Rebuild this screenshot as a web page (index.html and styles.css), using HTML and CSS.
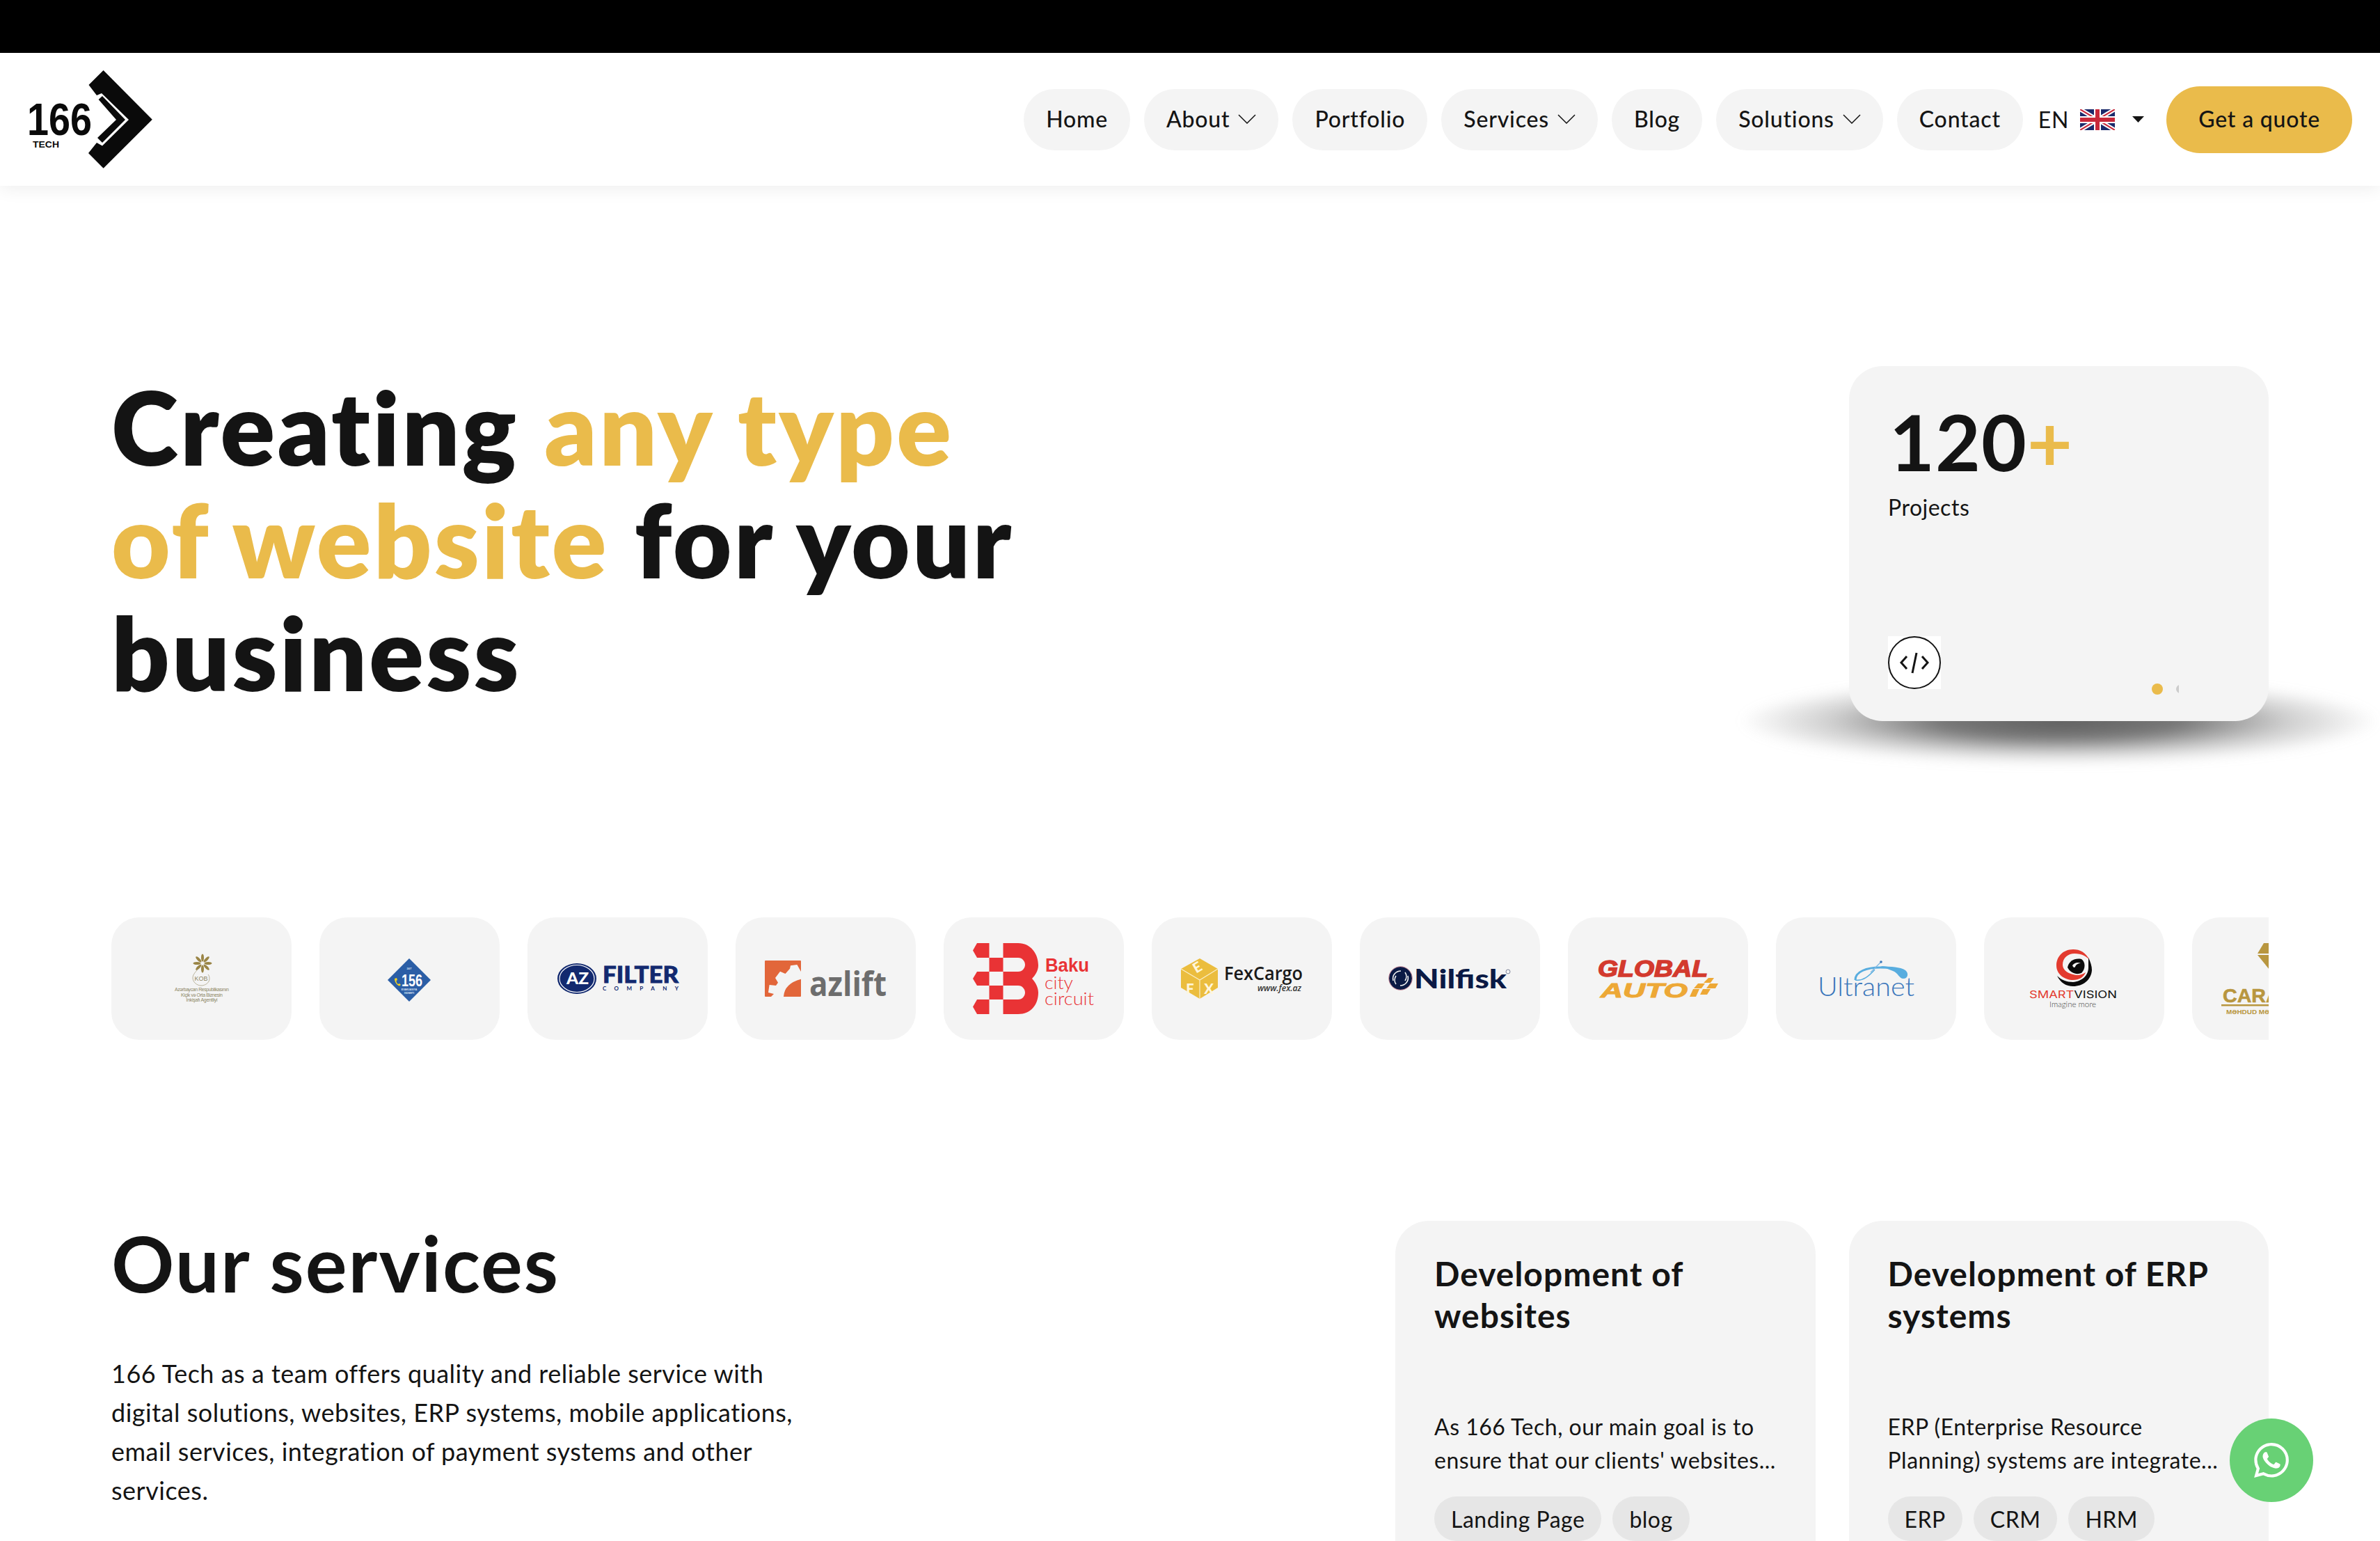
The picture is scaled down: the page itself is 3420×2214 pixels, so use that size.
FILE: index.html
```html
<!DOCTYPE html>
<html lang="en">
<head>
<meta charset="utf-8">
<title>166 Tech</title>
<link rel="stylesheet" href="styles.css">
</head>
<body>
<div class="topbar"></div>
<header class="header">
  <a class="logo" href="#">
    <svg width="240" height="191" viewBox="0 76 240 191">
      <polygon fill="#0a0a0a" points="148.6,101 218.8,171.7 148.6,241.7 127,220 139,205 147,209.5 185,172 146,134 139,137 127.5,122"/>
      <polygon fill="#0a0a0a" points="141.6,143 147,138 180,172 147,205 140,198 167,172"/>
      <text class="logo-num" x="39" y="194" textLength="93" lengthAdjust="spacingAndGlyphs">166</text>
      <text class="logo-tech" x="47" y="212" textLength="38" lengthAdjust="spacingAndGlyphs">TECH</text>
    </svg>
  </a>
  <nav class="nav">
    <a class="pill" href="#">Home</a>
    <a class="pill" href="#">About<svg class="chev" width="26" height="14" viewBox="0 0 26 14"><path d="M1 1l12 12L25 1"/></svg></a>
    <a class="pill" href="#">Portfolio</a>
    <a class="pill" href="#">Services<svg class="chev" width="26" height="14" viewBox="0 0 26 14"><path d="M1 1l12 12L25 1"/></svg></a>
    <a class="pill" href="#">Blog</a>
    <a class="pill" href="#">Solutions<svg class="chev" width="26" height="14" viewBox="0 0 26 14"><path d="M1 1l12 12L25 1"/></svg></a>
    <a class="pill" href="#">Contact</a>
    <div class="lang">
      <span>EN</span>
      <svg class="flag" width="50" height="30" viewBox="0 0 50 30">
        <rect width="50" height="30" fill="#1b2a6b"/>
        <path d="M0 0L50 30M50 0L0 30" stroke="#fff" stroke-width="6"/>
        <path d="M0 0L50 30M50 0L0 30" stroke="#c8283a" stroke-width="2"/>
        <path d="M25 0V30M0 15H50" stroke="#fff" stroke-width="10"/>
        <path d="M25 0V30M0 15H50" stroke="#c8283a" stroke-width="6"/>
      </svg>
      <svg class="caret" width="17" height="9" viewBox="0 0 17 9"><polygon points="0,0 17,0 8.5,9" fill="#141414"/></svg>
    </div>
    <a class="quote" href="#">Get a quote</a>
  </nav>
</header>

<main class="main">
  <section class="hero">
    <h1 class="hero-title">Creating <em>any type<br>of website</em> for your<br>business</h1>
    <aside class="stat">
      <div class="stat-num">120<em>+</em></div>
      <div class="stat-label">Projects</div>
      <div class="stat-foot">
        <span class="stat-icon">
          <svg width="76" height="76" viewBox="0 0 76 76" fill="none" stroke="#141414">
            <circle cx="38" cy="38" r="37" stroke-width="2"/>
            <path d="M27 29l-8 9 8 9M49 29l8 9-8 9" stroke-width="3"/>
            <path d="M41 24l-6 29" stroke-width="3"/>
          </svg>
        </span>
        <span class="dots"><i class="dot dot-on"></i><i class="dot dot-off"></i></span>
      </div>
    </aside>
  </section>

  <section class="logos">
    <div class="logo-card">
      <svg width="259" height="176" viewBox="0 0 259 176">
        <g fill="#9a8546" transform="translate(131 66)">
          <ellipse cx="0" cy="-8" rx="2" ry="5.500"/><ellipse cx="0" cy="-8" rx="2" ry="5.500" transform="rotate(45)"/><ellipse cx="0" cy="-8" rx="2" ry="5.500" transform="rotate(90)"/><ellipse cx="0" cy="-8" rx="2" ry="5.500" transform="rotate(135)"/><ellipse cx="0" cy="-8" rx="2" ry="5.500" transform="rotate(180)"/><ellipse cx="0" cy="-8" rx="2" ry="5.500" transform="rotate(225)"/><ellipse cx="0" cy="-8" rx="2" ry="5.500" transform="rotate(270)"/><ellipse cx="0" cy="-8" rx="2" ry="5.500" transform="rotate(315)"/>
        </g>
        <path d="M125 74c-5 5-8 9-8 13 0 6 6 11 12 11s12-4 12-10c0-3-1-5-2-6" fill="none" stroke="#a9a184" stroke-width=".8"/>
        <text class="t-kob-big" x="129" y="91" text-anchor="middle">KOB</text>
        <text class="t-kob" x="130" y="106" text-anchor="middle" textLength="78">Azərbaycan Respublikasının</text>
        <text class="t-kob" x="130" y="114" text-anchor="middle" textLength="60">Kiçik və Orta Biznesin</text>
        <text class="t-kob" x="130" y="121" text-anchor="middle" textLength="45">İnkişafı Agentliyi</text>
      </svg>
    </div>
    <div class="logo-card">
      <svg width="259" height="176" viewBox="0 0 259 176">
        <polygon points="129,59 160,90 129,121 98,90" fill="#2b5ea6"/>
        <text class="t-156" x="118" y="98.500" textLength="30" lengthAdjust="spacingAndGlyphs">156</text>
        <path d="M108 88l3-1 1 3-1.500 1c0 2 1 4 2.500 5l2-1 2 2-2 1.500c-4-1-7-6-7-10.500z" fill="#f4d21f"/>
        <text class="t-156s" x="129" y="75" text-anchor="middle">24/7</text>
        <text class="t-156s" x="129" y="105" text-anchor="middle">EVAKUASIYA</text>
        <text class="t-156s" x="129" y="110" text-anchor="middle">XİDMƏTİ</text>
      </svg>
    </div>
    <div class="logo-card">
      <svg width="259" height="176" viewBox="0 0 259 176">
        <ellipse cx="71" cy="88" rx="28" ry="22" fill="#12296f"/>
        <ellipse cx="71" cy="88" rx="25" ry="19.500" fill="none" stroke="#fff" stroke-width="1.200"/>
        <text class="t-az" x="56" y="96" textLength="32" lengthAdjust="spacingAndGlyphs">AZ</text>
        <text class="t-filter" x="108" y="94" textLength="109" lengthAdjust="spacingAndGlyphs">FILTER</text>
        <text class="t-company" x="108" y="105" textLength="109">COMPANY</text>
      </svg>
    </div>
    <div class="logo-card">
      <svg width="259" height="176" viewBox="0 0 259 176">
        <rect x="42" y="62" width="52" height="52" rx="1" fill="#e2663a"/>
        <path d="M88.400 68L79 69.300 78 73.700 71.500 81 64 77.700 57 87 61 93.700 58 98 48.600 97 47 108 55 110 51 114H69Q70 95 94 88.700V78z" fill="#f4f4f4"/>
        <text class="t-azlift" x="106" y="113" textLength="111" lengthAdjust="spacingAndGlyphs">azlift</text>
      </svg>
    </div>
    <div class="logo-card">
      <svg width="259" height="176" viewBox="0 0 259 176">
        <g fill="#e93335">
          <path d="M48 37h17.500v21H48l-6-10.500z"/><path d="M48 78h17.500v20H48l-6-10z"/><path d="M48 118h17.500v21H48l-6-10.500z"/>
          <rect x="65.500" y="58" width="20" height="20"/><rect x="65.500" y="98" width="20" height="20"/>
          <path d="M85.500 37H107C125 37 136 52 136 69C136 77 131 84 127 88C131 92 136 100 136 108C136 126 125 139 107 139H85.500V118H107C113 118 117 113 117 108C117 103 113 98 107 98H85.500V78H107C113 78 117 73 117 68C117 63 113 58 107 58H85.500z"/>
        </g>
        <text class="t-baku" x="146" y="78" textLength="63" lengthAdjust="spacingAndGlyphs">Baku</text>
        <text class="t-city" x="145" y="103" textLength="41" lengthAdjust="spacingAndGlyphs">city</text>
        <text class="t-city" x="145" y="126" textLength="71" lengthAdjust="spacingAndGlyphs">circuit</text>
      </svg>
    </div>
    <div class="logo-card">
      <svg width="259" height="176" viewBox="0 0 259 176">
        <polygon points="69,59 95,74 95,101 69,117 42,101 42,74" fill="#ebbd3e"/>
        <path d="M42 74l27 16 26-16M69 90v27" stroke="#fbefc8" stroke-width="1.200" fill="none"/>
        <text class="t-fex" transform="translate(69 78) rotate(-30)" text-anchor="middle">E</text>
        <text class="t-fex" x="55" y="110" text-anchor="middle">F</text>
        <text class="t-fex" x="82" y="110" text-anchor="middle">X</text>
        <text class="t-fexc" x="104" y="90" textLength="113" lengthAdjust="spacingAndGlyphs">FexCargo</text>
        <text class="t-fexw" x="152" y="106" textLength="63" lengthAdjust="spacingAndGlyphs">www.fex.az</text>
      </svg>
    </div>
    <div class="logo-card">
      <svg width="259" height="176" viewBox="0 0 259 176">
        <circle cx="58.500" cy="87.500" r="16.500" fill="#0b1a45"/>
        <circle cx="58.500" cy="87.500" r="16.800" fill="none" stroke="#b5667a" stroke-width=".8"/>
        <path d="M48 91c-2-8 4-14 11-14M69 84c2 8-4 14-11 14M52 96c-3-4-2-9 0-12M65 79c3 4 2 9 0 12" fill="none" stroke="#f4f4f4" stroke-width="1.600"/>
        <text class="t-nil" x="78" y="102" textLength="133" lengthAdjust="spacingAndGlyphs">Nilfisk</text>
        <circle cx="213" cy="78" r="3" fill="none" stroke="#7f8599"/>
      </svg>
    </div>
    <div class="logo-card">
      <svg width="259" height="176" viewBox="0 0 259 176">
        <text class="t-global" x="43" y="85" textLength="158" lengthAdjust="spacingAndGlyphs">GLOBAL</text>
        <text class="t-auto" x="47" y="115" textLength="125" lengthAdjust="spacingAndGlyphs">AUTO</text>
        <g fill="#eda836">
          <polygon points="202,87 210,87 205,94 195,94"/>
          <polygon points="187,95 197,95 192,102 181,102"/>
          <polygon points="204,95 216,95 212,102 199,102"/>
          <polygon points="180,103 189,103 184,114 175,114"/>
          <polygon points="194,103 205,103 200,111 190,111"/>
        </g>
      </svg>
    </div>
    <div class="logo-card">
      <svg width="259" height="176" viewBox="0 0 259 176">
        <path d="M114 90C114 78 130 72 150 72C165 72 176 74 184 78" fill="none" stroke="#58addf" stroke-width="3"/>
        <path d="M114 90C125 92 134 84 142 75" fill="none" stroke="#58addf" stroke-width="1.500"/>
        <path d="M150 70C166 71 178 71 186 76C191 80 190 88 183 88C177 88 176 80 168 77z" fill="#58addf"/>
        <path d="M136 79L150 65" stroke="#7fb7e0" stroke-width="1.200"/><circle cx="151" cy="64" r="1.800" fill="#3a76bb"/>
        <text class="t-ultra" x="60" y="113" textLength="139" lengthAdjust="spacingAndGlyphs">Ultranet</text>
      </svg>
    </div>
    <div class="logo-card">
      <svg width="259" height="176" viewBox="0 0 259 176">
        <path d="M152 62C146 50 138 46 128 46C113 46 104 57 104 69C104 82 116 90 128 90C137 90 143 86 146 79C140 83 134 84 128 82C118 80 113 74 113 68C113 58 121 52 130 52C140 52 148 56 152 62z" fill="#e33b2f"/>
        <path d="M150 58C153 64 155 70 155 76C154 90 142 99 128 99C118 99 110 94 105 84C111 90 119 93 128 93C140 92 150 84 150 72C150 67 150 62 150 58z" fill="#0b0b0b"/>
        <path d="M120 72C122 62 131 58 140 60C146 64 146 74 140 80C133 83 124 80 120 72z" fill="#0b0b0b"/>
        <path d="M127 69C130 65 135 64 139 66C135 66 132 68 131 71C130 73 128 72 127 69z" fill="#f4f4f4"/>
        <text class="t-smart" x="65" y="116" textLength="126" lengthAdjust="spacingAndGlyphs"><tspan fill="#e33b2f">SMART</tspan><tspan fill="#111">VISION</tspan></text>
        <text class="t-imagine" x="94" y="129" textLength="67" lengthAdjust="spacingAndGlyphs">Imagine more</text>
      </svg>
    </div>
    <div class="logo-card">
      <svg width="259" height="176" viewBox="0 0 259 176">
        <polygon points="103,37 118,37 128,52 94,52" fill="#b8963f"/>
        <polygon points="94,54 128,54 111,75" fill="#b8963f"/>
        <text class="t-carat" x="44" y="122" textLength="98" lengthAdjust="spacingAndGlyphs">CARAT</text>
        <rect x="42" y="125" width="120" height="2.500" fill="#b8963f"/>
        <text class="t-mehdud" x="49" y="139" textLength="120" lengthAdjust="spacingAndGlyphs">MƏHDUD MƏSULİYYƏTLİ</text>
      </svg>
    </div>
  </section>

  <section class="services">
    <div class="services-intro">
      <h2 class="services-title">Our services</h2>
      <p class="services-text">166 Tech as a team offers quality and reliable service with digital solutions, websites, ERP systems, mobile applications, email services, integration of payment systems and other services.</p>
    </div>
    <div class="service-cards">
      <article class="service-card">
        <h3 class="service-name">Development of websites</h3>
        <p class="service-desc">As 166 Tech, our main goal is to ensure that our clients' websites...</p>
        <div class="chips"><span class="chip">Landing Page</span><span class="chip">blog</span></div>
      </article>
      <article class="service-card">
        <h3 class="service-name">Development of ERP systems</h3>
        <p class="service-desc">ERP (Enterprise Resource Planning) systems are integrate...</p>
        <div class="chips"><span class="chip">ERP</span><span class="chip">CRM</span><span class="chip">HRM</span></div>
      </article>
    </div>
  </section>
</main>

<a class="whatsapp" href="#" aria-label="WhatsApp">
  <svg width="50" height="50" viewBox="0 0 24 24" fill="#fff"><path d="M17.472 14.382c-.297-.149-1.758-.867-2.03-.967-.273-.099-.471-.148-.67.15-.197.297-.767.966-.94 1.164-.173.199-.347.223-.644.075-.297-.15-1.255-.463-2.39-1.475-.883-.788-1.48-1.761-1.653-2.059-.173-.297-.018-.458.13-.606.134-.133.298-.347.446-.52.149-.174.198-.298.298-.497.099-.198.05-.371-.025-.52-.075-.149-.669-1.612-.916-2.207-.242-.579-.487-.5-.669-.51-.173-.008-.371-.01-.57-.01-.198 0-.52.074-.792.372-.272.297-1.04 1.016-1.04 2.479 0 1.462 1.065 2.875 1.213 3.074.149.198 2.096 3.2 5.077 4.487.709.306 1.262.489 1.694.625.712.227 1.36.195 1.871.118.571-.085 1.758-.719 2.006-1.413.248-.694.248-1.289.173-1.413-.074-.124-.272-.198-.57-.347m-5.421 7.403h-.004a9.87 9.87 0 01-5.031-1.378l-.361-.214-3.741.982.998-3.648-.235-.374a9.86 9.86 0 01-1.51-5.26c.001-5.45 4.436-9.884 9.888-9.884 2.64 0 5.122 1.03 6.988 2.898a9.825 9.825 0 012.893 6.994c-.003 5.45-4.437 9.884-9.885 9.884m8.413-18.297A11.815 11.815 0 0012.05 0C5.495 0 .16 5.335.157 11.892c0 2.096.547 4.142 1.588 5.945L.057 24l6.305-1.654a11.882 11.882 0 005.683 1.448h.005c6.554 0 11.89-5.335 11.893-11.893a11.821 11.821 0 00-3.48-8.413z"/></svg>
</a>
</body>
</html>
```

FILE: styles.css
```css
* { box-sizing: border-box; }
html, body { height: 2214px; overflow: hidden; }
body { margin: 0; background: #fff; color: #141414; font-family: "Lato", "Noto Sans", sans-serif; font-size: 32px; letter-spacing: .5px; font-variant-ligatures: none; }
a { color: inherit; text-decoration: none; }
em { font-style: normal; color: #eabb4b; }
h1, h2, h3, p { margin: 0; }
svg text { letter-spacing: 0; }

.topbar { height: 76px; background: #000; }
.header { height: 191px; display: flex; align-items: center; justify-content: space-between; padding-right: 40px; background: #fff; box-shadow: 0 4px 24px rgba(0,0,0,.07); position: relative; z-index: 2; }
.logo { display: block; height: 191px; }
.logo-num { font: 700 64px "Liberation Sans", sans-serif; fill: #0a0a0a; }
.logo-tech { font: 700 12px "Liberation Sans", sans-serif; fill: #0a0a0a; }

.nav { display: flex; align-items: center; gap: 20px; letter-spacing: .8px; }
.pill { height: 88px; padding: 0 32px 2px; display: flex; align-items: center; gap: 12px; border-radius: 44px; background: #f4f4f4; font-weight: 500; }
.chev { fill: none; stroke: #141414; stroke-width: 1.500; }
.lang { display: flex; align-items: center; gap: 16px; margin-left: 2px; }
.flag { display: block; }
.caret { display: block; margin-left: 9px; }
.quote { height: 96px; padding: 0 46px 2px; display: flex; align-items: center; margin-left: 12px; border-radius: 48px; background: #eabb4b; font-weight: 500; }

.main { padding: 0 160px; }
.hero { margin-top: 259px; display: flex; justify-content: space-between; align-items: flex-start; }
.hero-title { font-size: 146px; line-height: 162px; font-weight: 800; letter-spacing: 3.200px; padding-top: 6px; }
.stat { width: 603px; height: 510px; flex: none; position: relative; padding: 52px 56px 46px; background: #f4f4f4; border-radius: 48px; display: flex; flex-direction: column; letter-spacing: .5px; }
.stat::after { content: ""; position: absolute; left: -158px; width: 920px; bottom: -62px; height: 124px; background: radial-gradient(ellipse closest-side, rgba(95,95,95,1) 0%, rgba(100,100,100,.88) 38%, rgba(130,130,130,.38) 72%, rgba(200,200,200,0) 100%); filter: blur(8px); z-index: -1; }
.stat-num { font-size: 112px; line-height: 112px; font-weight: 700; padding-left: 2px; letter-spacing: 1px; }
.stat-label { margin-top: 15px; line-height: 48px; }
.stat-foot { margin-top: auto; display: flex; justify-content: space-between; align-items: flex-end; height: 76px; }
.stat-icon { display: block; width: 76px; height: 76px; background: #fff; }
.stat-icon svg { display: block; }
.dots { display: flex; gap: 20px; width: 39px; margin-right: 73px; margin-bottom: -8px; overflow: hidden; height: 16px; }
.dot { flex: none; width: 16px; height: 16px; border-radius: 50%; }
.dot-on { background: #eabb4b; }
.dot-off { width: 12px; height: 12px; margin: 2px 0 0 -1px; background: #ccc; }

.logos { margin-top: 282px; display: flex; gap: 40px; overflow: hidden; height: 176px; }
.logo-card { flex: none; width: 259px; height: 176px; background: #f4f4f4; border-radius: 40px; }
.logo-card svg { display: block; }
.t-kob { font: 400 7px "Liberation Sans", sans-serif; fill: #8d8665; }
.t-kob-big { font: 400 9px "Liberation Sans", sans-serif; fill: #8d8665; }
.t-156 { font: 700 24px "Liberation Sans", sans-serif; fill: #fff; }
.t-156s { font: 700 3.500px "Liberation Sans", sans-serif; fill: #dfe8f5; }
.t-az { font: 900 23px "Lato", sans-serif; fill: #fff; }
.t-filter { font: 900 33px "Lato", sans-serif; fill: #12296f; stroke: #12296f; stroke-width: .8px; }
.t-company { font: 700 8px "Lato", sans-serif; fill: #12296f; }
.t-azlift { font: 700 48px "Open Sans", sans-serif; fill: #6d6d6d; }
.t-baku { font: 700 27px "Liberation Sans", sans-serif; fill: #e93335; }
.t-city { font: 300 26px "Lato", sans-serif; fill: #e93335; }
.t-fex { font: 900 20px "Lato", sans-serif; fill: #fff6dc; }
.t-fexc { font: 600 27px "Open Sans", sans-serif; fill: #1a1a1a; }
.t-fexw { font: italic 600 13px "Open Sans", sans-serif; fill: #333; }
.t-nil { font: 900 38px "Lato", sans-serif; fill: #0b1a45; }
.t-global { font: italic 700 33px "Liberation Sans", sans-serif; fill: #d33a2e; stroke: #d33a2e; stroke-width: 1.500px; }
.t-auto { font: italic 700 29px "Liberation Sans", sans-serif; fill: #eda836; stroke: #eda836; stroke-width: 1px; }
.t-ultra { font: 300 38px "Lato", sans-serif; fill: #3a76bb; }
.t-smart { font: 400 15px "Inter", sans-serif; }
.t-imagine { font: 300 11px "Lato", sans-serif; fill: #444; }
.t-carat { font: 900 28px "Liberation Sans", sans-serif; fill: #b8963f; stroke: #b8963f; stroke-width: .6px; }
.t-mehdud { font: 700 9px "Liberation Sans", sans-serif; fill: #b8963f; }

.services { margin-top: 260px; display: flex; justify-content: space-between; align-items: flex-start; }
.services-title { font-size: 112px; line-height: 112px; font-weight: 700; padding-top: 4px; letter-spacing: 2px; }
.services-text { width: 1000px; margin-top: 75px; font-size: 36px; line-height: 56px; }
.service-cards { display: grid; grid-template-columns: 603.5px 603.5px; gap: 48px; }
.service-card { height: 560px; padding: 46px 56px 48px; background: #f4f4f4; border-radius: 48px; }
.service-name { font-size: 48px; line-height: 60px; font-weight: 700; height: 120px; letter-spacing: 1px; }
.service-desc { margin-top: 106px; line-height: 48px; width: 504px; }
.chips { margin-top: 28px; display: flex; gap: 16px; }
.chip { height: 64px; padding: 0 24px; display: flex; align-items: center; background: #e6e6e6; border-radius: 32px; }

.whatsapp { position: fixed; left: 3204px; top: 2038px; width: 120px; height: 120px; border-radius: 50%; background: #68d175; display: flex; align-items: center; justify-content: center; z-index: 5; }
.whatsapp svg { display: block; }
```
